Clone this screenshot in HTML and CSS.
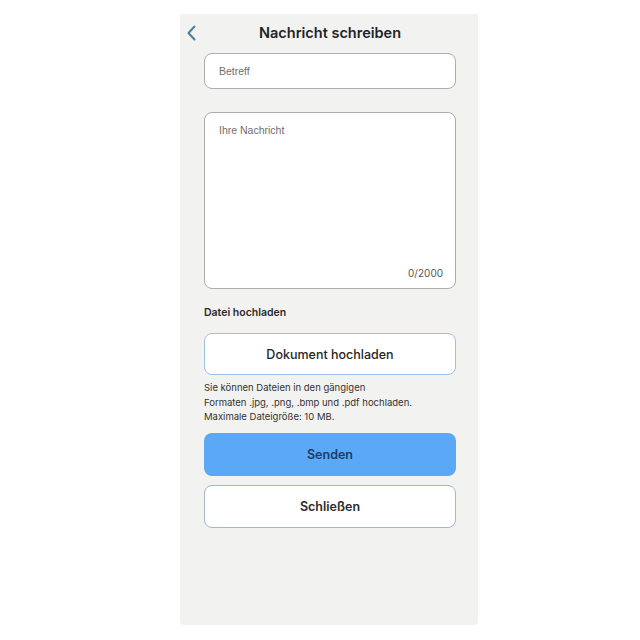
FILE: index.html
```html
<!DOCTYPE html>
<html lang="de">
<head>
<meta charset="utf-8">
<link rel="stylesheet" href="styles.css">
</head>
<body>
<div class="phone">
  <header class="bar">
    <svg class="back" width="11" height="16" viewBox="0 0 11 16"><path d="M8.5 1.5 L2.5 8 L8.5 14.5" fill="none" stroke="#4a7ea6" stroke-width="2" stroke-linecap="round" stroke-linejoin="round"/></svg>
    <h1 class="title">Nachricht schreiben</h1>
  </header>
  <main class="form">
    <div class="field"><span class="ph">Betreff</span></div>
    <div class="area">
      <span class="ph">Ihre Nachricht</span>
      <span class="count">0/2000</span>
    </div>
    <div class="label">Datei hochladen</div>
    <button class="btn upload">Dokument hochladen</button>
    <p class="help">Sie können Dateien in den gängigen<br>Formaten .jpg, .png, .bmp und .pdf hochladen.<br>Maximale Dateigröße: 10 MB.</p>
    <button class="btn send">Senden</button>
    <button class="btn close">Schließen</button>
  </main>
</div>
</body>
</html>
```

FILE: styles.css
```css
html, body {
  margin: 0;
  padding: 0;
  background: #ffffff;
}
body {
  font-family: Inter, "Liberation Sans", sans-serif;
  color: #222;
}
.phone {
  margin: 14px 0 0 180px;
  width: 298px;
  height: 611px;
  background: #f2f2f0;
  border-radius: 0 0 4px 4px;
  box-sizing: border-box;
  padding: 0 22px 0 24px;
}
.bar {
  height: 36px;
  display: flex;
  align-items: center;
  justify-content: center;
  position: relative;
}
.back {
  position: absolute;
  left: -18px;
  top: 11px;
}
.title {
  margin: 0;
  font-size: 14.5px;
  font-weight: 600;
  color: #1f2328;
}
.form {
  display: flex;
  flex-direction: column;
  padding-top: 3px;
}
.field {
  height: 36px;
  box-sizing: border-box;
  border: 1px solid #adadad;
  border-radius: 8px;
  background: #fff;
  display: flex;
  align-items: center;
  padding-left: 14px;
}
.ph {
  font-family: "Liberation Sans", sans-serif;
  font-size: 10.5px;
  color: #6e6e6e;
}
.area {
  margin-top: 23px;
  height: 177px;
  box-sizing: border-box;
  border: 1px solid #adadad;
  border-radius: 8px;
  background: #fff;
  display: flex;
  flex-direction: column;
  justify-content: space-between;
  padding: 11px 12px 9px 14px;
}
.count {
  align-self: flex-end;
  font-size: 10px;
  color: #555;
}
.label {
  margin-top: 16px;
  line-height: 16px;
  font-size: 10.5px;
  font-weight: 600;
  color: #2a2a2a;
}
.btn {
  display: block;
  width: 100%;
  box-sizing: border-box;
  border-radius: 8px;
  font-family: Inter, "Liberation Sans", sans-serif;
  font-size: 12.5px;
  font-weight: 600;
  color: #262626;
  background: #fff;
  padding: 0;
}
.upload {
  margin-top: 12px;
  height: 42px;
  border: 1.5px solid #9ec0e6;
  font-weight: 500;
  font-size: 12.5px;
}
.help {
  margin: 6px 0 0;
  font-size: 9.5px;
  line-height: 14.5px;
  color: #333;
}
.send {
  margin-top: 8px;
  height: 43px;
  border: none;
  background: #5ba9f6;
  color: #1b3c68;
}
.close {
  margin-top: 9px;
  height: 43px;
  border: 1.5px solid #a3b6cb;
  color: #2b2b2b;
}
```
